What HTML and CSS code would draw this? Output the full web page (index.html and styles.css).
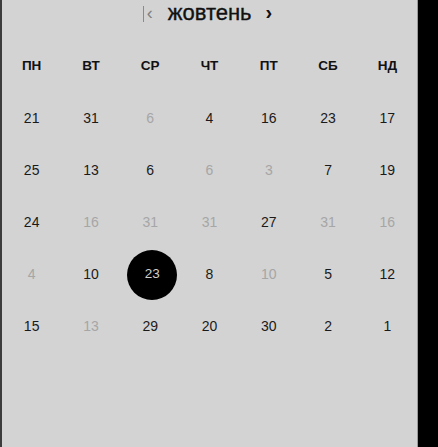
FILE: index.html
```html
<!DOCTYPE html>
<html lang="uk">
<head>
<meta charset="utf-8">
<link rel="stylesheet" href="styles.css">
</head>
<body>
<div class="calendar">
  <div class="nav">
    <span class="first"><span class="bar"></span><span class="prev">‹</span></span>
    <span class="month">жовтень</span>
    <span class="next">›</span>
  </div>
  <div class="grid">
    <div class="dow">ПН</div><div class="dow">ВТ</div><div class="dow">СР</div><div class="dow">ЧТ</div><div class="dow">ПТ</div><div class="dow">СБ</div><div class="dow">НД</div>

    <div class="day">21</div><div class="day">31</div><div class="day muted">6</div><div class="day">4</div><div class="day">16</div><div class="day">23</div><div class="day">17</div>
    <div class="day">25</div><div class="day">13</div><div class="day">6</div><div class="day muted">6</div><div class="day muted">3</div><div class="day">7</div><div class="day">19</div>
    <div class="day">24</div><div class="day muted">16</div><div class="day muted">31</div><div class="day muted">31</div><div class="day">27</div><div class="day muted">31</div><div class="day muted">16</div>
    <div class="day muted">4</div><div class="day">10</div><div class="day selected"><span>23</span></div><div class="day">8</div><div class="day muted">10</div><div class="day">5</div><div class="day">12</div>
    <div class="day">15</div><div class="day muted">13</div><div class="day">29</div><div class="day">20</div><div class="day">30</div><div class="day">2</div><div class="day">1</div>
  </div>
</div>
</body>
</html>
```
FILE: styles.css
```css
html, body {
  margin: 0;
  padding: 0;
  background: #000;
}
body {
  width: 438px;
  height: 447px;
  overflow: hidden;
  font-family: "Liberation Sans", Arial, sans-serif;
}
.calendar {
  box-sizing: border-box;
  width: 418px;
  height: 447px;
  background: #d3d3d3;
  border-left: 2px solid #3c3c3c;
  border-right: 1px solid #9a9a9a;
}
.nav {
  height: 27px;
  display: flex;
  align-items: center;
  justify-content: center;
  padding-right: 4px;
}
.first {
  display: flex;
  align-items: center;
  color: #808080;
}
.bar {
  display: block;
  width: 1px;
  height: 16px;
  background: #8a8a8a;
  margin-right: 3px;
  margin-top: 1px;
}
.prev {
  font-size: 18px;
  line-height: 1;
  margin-top: -2px;
}
.month {
  margin: -1px 14px 0 15px;
  font-size: 22px;
  color: #111;
  line-height: 1;
  -webkit-text-stroke: 0.35px #111;
}
.next {
  font-size: 20px;
  font-weight: bold;
  color: #111;
  line-height: 1;
  margin-top: -4px;
}
.grid {
  margin-top: 13px;
  display: grid;
  grid-template-columns: repeat(7, 1fr);
  grid-auto-rows: 52px;
  align-items: center;
  justify-items: center;
}
.dow {
  font-size: 13.5px;
  font-weight: bold;
  color: #111;
  margin-top: -2px;
}
.day {
  font-size: 14px;
  color: #1a1a1a;
  margin-top: -1px;
}
.day.muted {
  color: #a6a6a6;
}
.day.selected {
  width: 50px;
  height: 50px;
  border-radius: 50%;
  background: #000;
  color: #d0d0d0;
  display: flex;
  align-items: center;
  justify-content: center;
  font-size: 13.5px;
  margin-top: 2px;
  margin-left: 4px;
}
.day.selected span {
  margin-top: -3px;
}
```
